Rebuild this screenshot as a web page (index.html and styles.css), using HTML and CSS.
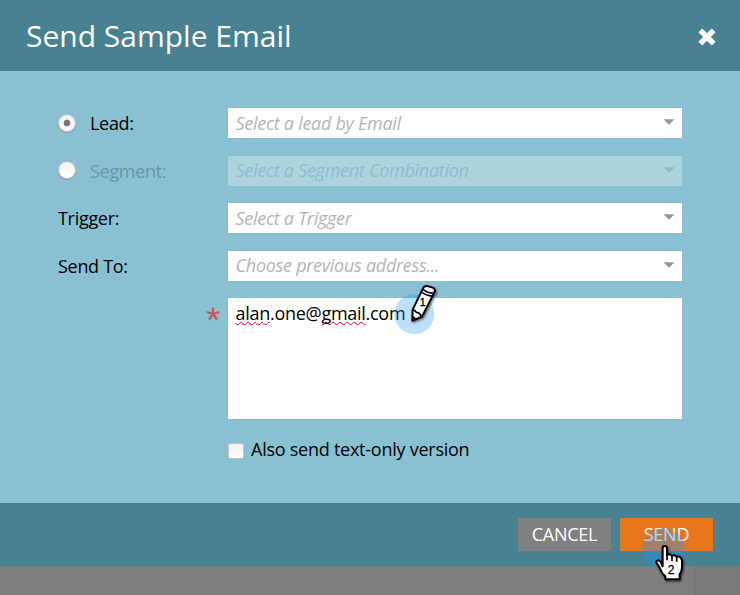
FILE: index.html
```
<!DOCTYPE html>
<html lang="en">
<head>
<meta charset="utf-8">
<title>Send Sample Email</title>
<link rel="stylesheet" href="styles.css">
</head>
<body>
<main class="dialog">
  <header class="header">
    <h1>Send Sample Email</h1>
    <svg class="close" viewBox="0 0 18 18"><path d="M2.3 2.3L15.7 15.7M15.7 2.3L2.3 15.7"/></svg>
  </header>
  <section class="form">
    <div class="row">
      <span class="radio checked"></span><span class="label lead">Lead:</span>
      <div class="select"><span>Select a lead by Email</span><svg viewBox="0 0 12 6"><path d="M.5 .3H11.5L6 5.8Z"/></svg></div>
    </div>
    <div class="row disabled">
      <span class="radio"></span><span class="label segment">Segment:</span>
      <div class="select raised"><span>Select a Segment Combination</span><svg viewBox="0 0 12 6"><path d="M.5 .3H11.5L6 5.8Z"/></svg></div>
    </div>
    <div class="row">
      <span class="label">Trigger:</span>
      <div class="select"><span>Select a Trigger</span><svg viewBox="0 0 12 6"><path d="M.5 .3H11.5L6 5.8Z"/></svg></div>
    </div>
    <div class="row">
      <span class="label">Send To:</span>
      <div class="select raised"><span>Choose previous address...</span><svg viewBox="0 0 12 6"><path d="M.5 .3H11.5L6 5.8Z"/></svg></div>
    </div>
    <div class="address-row">
      <svg class="required" viewBox="0 0 16 16"><path d="M8 8V1.5M8 8L1.8 6M8 8L14.2 6M8 8L4 13.6M8 8L12 13.6"/></svg>
      <div class="address"><span class="misspelled">alan</span>.one@<span class="misspelled">gmail</span>.com</div>
    </div>
    <div class="check-row"><span class="checkbox"></span><span class="check-label">Also send text-only version</span></div>
  </section>
  <footer class="footer">
    <span class="button cancel">CANCEL</span>
    <span class="button send">SEND</span>
    <span class="click-halo"></span>
  </footer>
  <div class="backdrop"></div>
  <svg class="pencil" viewBox="0 0 210 195">
    <circle cx="103" cy="117" r="60" fill="#2196f3" fill-opacity=".3"/>
    <g class="drawn">
      <path d="M97 137L98 104L129 40Q133 31 145 34L158 38Q168 42 163 52L126 125Z"/>
      <path class="thin" d="M129 43Q137 53 162 55M125 51Q134 60 157 64M98 106Q104 103 109 112Q119 112 125 125"/>
      <path class="tip" d="M97 139V123Q105 124 110 132Z"/>
    </g>
    <text x="128" y="93">1</text>
  </svg>
  <svg class="hand" viewBox="0 0 210 180">
    <path class="drawn" d="M98 109V55Q98 48 104 48Q111 48 111 56V76Q119 68 126 78Q134 72 140 81Q148 76 153 85Q157 89 156 96V112Q156 123 149 133V148H106V139Q96 132 92 120Q87 108 80 99Q77 93 83 91Q89 90 93 97Z"/>
    <path class="fingers" d="M111 76V91M126 79V93M140 82V95"/>
    <text x="123" y="132">2</text>
  </svg>
</main>
</body>
</html>
```
FILE: styles.css
```
* { box-sizing: border-box; }
body { margin: 0; font-family: "Open Sans", sans-serif; color: #000; }
.dialog { position: relative; width: 740px; height: 595px; background: #89c1d2; overflow: hidden; }
.header { height: 71px; padding: 0 24px 0 26px; display: flex; align-items: center; justify-content: space-between; background: #478192; }
h1 { margin: 0; color: #fff; font-size: 30px; line-height: 40px; font-weight: 400; }
.close { width: 18px; height: 18px; margin-top: 3px; }
.close path { stroke: #fff; stroke-width: 5.4; }
.form { height: 432px; padding: 37px 58px 0; }
.row { height: 30px; margin-bottom: 18px; display: flex; align-items: center; }
.row.disabled { margin-bottom: 17px; }
.row .select { width: 454px; height: 30px; margin-left: auto; padding: 0 7px 0 7.5px; display: flex; align-items: center; justify-content: space-between; background: #fff; color: #b5b5b5; font-size: 18px; font-style: italic; line-height: 28px; letter-spacing: -.28px; white-space: nowrap; }
.raised span { margin-top: -2px; }
.select svg { width: 12px; height: 6px; margin-top: -2px; fill: #999; }
.radio { width: 18px; height: 18px; border: 1px solid #bbc3c6; border-radius: 50%; background: linear-gradient(#f4f4f4, #fff); box-shadow: 0 1px 1px #8a9da5; }
.disabled .radio { margin-top: -2px; }
.radio.checked { background: radial-gradient(circle, #777 0 3px, transparent 3.7px), linear-gradient(#eee, #fff); }
.label { font-size: 18px; line-height: 28px; letter-spacing: -.3px; }
.radio + .label { margin-left: 14px; }
.disabled .label { color: #6897a5; }
.disabled .select { background: #acd4de; color: #8fbdca; }
.disabled .select svg { fill: #91b8c4; }
.address-row { height: 121px; margin-top: -1px; display: flex; justify-content: flex-end; align-items: flex-start; }
.required { width: 16px; height: 16px; margin: 8px 7px 0 0; }
.required path { stroke: #c4585e; stroke-width: 2.3; }
.address { width: 454px; height: 121px; padding: 1px 7.5px; background: #fff; font-size: 18px; line-height: 28px; letter-spacing: -.28px; }
.misspelled { text-decoration: underline wavy #e60012 1px; text-underline-offset: 1px; text-decoration-skip-ink: none; }
.check-row { height: 28px; margin: 17px 0 0 170px; display: flex; align-items: center; font-size: 18px; letter-spacing: -.25px; }
.checkbox { width: 16px; height: 16px; margin: 1px 7px 0 0; border: 1px solid #c0c6c8; border-radius: 2px; background: linear-gradient(#f1f1f1, #fff); }
.check-label { margin-top: -2px; }
.footer { position: relative; height: 63px; padding: 0 27px; display: flex; align-items: center; justify-content: flex-end; gap: 9px; background: #478192; overflow: hidden; }
.button { width: 93px; height: 33px; padding-bottom: 2px; display: flex; align-items: center; justify-content: center; font-size: 18px; letter-spacing: -.25px; color: #fff; }
.cancel { background: #808080; }
.send { background: #e8771c; }
.click-halo { position: absolute; left: 642px; top: 25px; width: 43px; height: 43px; border-radius: 50%; background: rgba(33, 150, 243, .35); }
.backdrop { height: 29px; background: linear-gradient(90deg, #807d80 693px, #7b787b 693px); }
.pencil { position: absolute; left: 380px; top: 275px; width: 70px; height: 65px; }
.hand { position: absolute; left: 630px; top: 530px; width: 70px; height: 60px; }
.drawn { fill: #fff; stroke: #000; stroke-width: 6; stroke-linejoin: round; filter: drop-shadow(3px 4px 3px rgba(0, 0, 0, .6)); }
.thin, .fingers { fill: none; stroke: #000; stroke-width: 5; }
.tip { fill: #000; stroke: none; }
.pencil text, .hand text { font-family: "Liberation Sans", sans-serif; font-size: 36px; text-anchor: middle; fill: #000; stroke: #000; stroke-width: .8; }
.pencil text { font-size: 32px; }
```
